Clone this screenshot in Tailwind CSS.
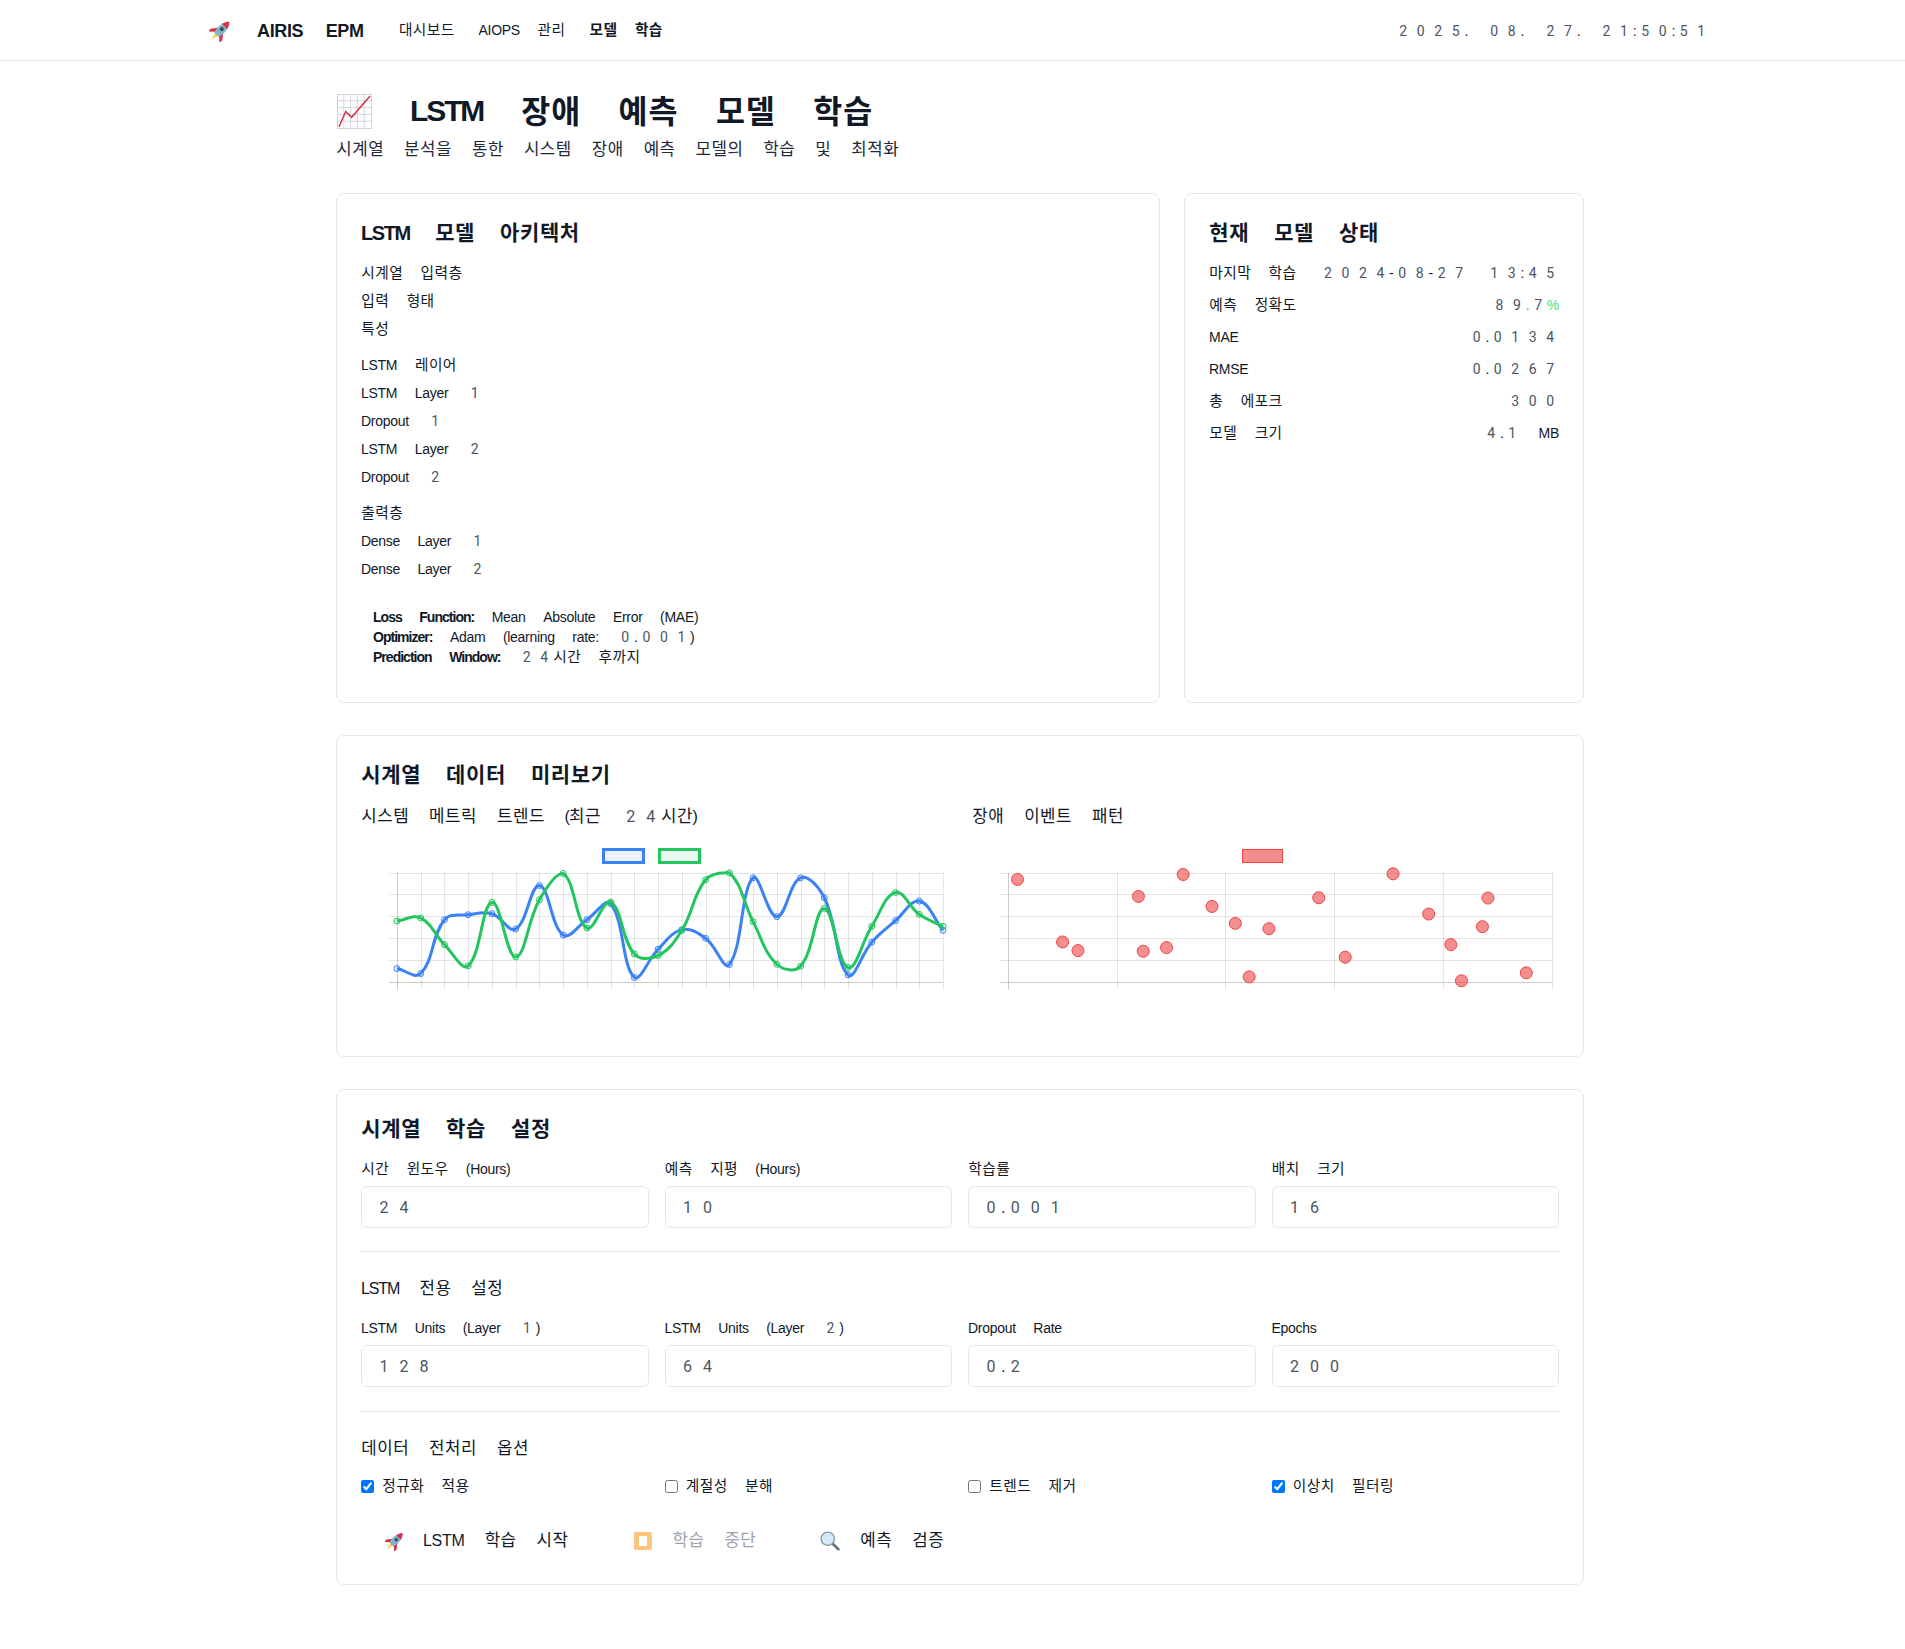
<!DOCTYPE html>
<html lang="ko">
<head>
  <meta charset="UTF-8" />
  <title>LSTM 장애 예측 모델 학습</title>
  <script src="https://cdn.jsdelivr.net/npm/@tailwindcss/browser@4"></script>
</head>
<body class="bg-white text-[#111827] font-['Liberation_Sans','Noto_Sans_CJK_KR',sans-serif]">

  <!-- nav -->
  <nav class="h-[61px] pt-[1px] border-b border-[#e5e7eb] flex items-center justify-between pl-[208px] pr-[195px]">
    <div class="flex items-center">
      <svg class="ml-[1px] w-[23px] h-[23px]" viewBox="0 0 24 24">
        <g transform="rotate(45 12 12)">
          <path d="M8 12L3.500 18v4L9 17zM16 12l4.500 6v4L15 17z" fill="#dd2e44"/>
          <path d="M9.500 17h5L12 25z" fill="#ffcc4d"/>
          <path d="M12 -1C15 2 16.500 7 16.500 12L15.500 18h-7L7.500 12C7.500 7 9 2 12 -1z" fill="#7fb2cc"/>
          <path d="M12 -1C13.800 .8 15.100 3 15.800 6H8.200C8.900 3 10.200 .8 12 -1z" fill="#dd2e44"/>
          <circle cx="12" cy="10" r="2" fill="#37474f"/>
        </g>
      </svg>
      <span class="ml-[25px] text-lg font-bold">AIRIS EPM</span>
      <div class="ml-[35px] flex items-center gap-[24px] text-sm">
        <span>대시보드</span>
        <span>AIOPS 관리</span>
        <span class="font-bold">모델 학습</span>
      </div>
    </div>
    <div class="text-sm">2025. 08. 27. 21:50:51</div>
  </nav>

  <main class="ml-[336px] w-[1248px] pt-[30px]">
    <!-- page title -->
    <div class="flex items-center h-[40px]">
      <svg class="ml-[1px] w-[35px] h-[35px]" viewBox="0 0 36 36">
        <rect x="0.500" y="0.500" width="35" height="35" fill="#fff" stroke="#ccd6dd"/>
        <path d="M0 7h36M0 14h36M0 21h36M0 28h36M7 0v36M14 0v36M21 0v36M28 0v36" stroke="#ccd6dd" stroke-width="1" fill="none"/>
        <path d="M2 34l7-16 6 6L34 2" stroke="#dd2e44" stroke-width="1.500" fill="none"/>
      </svg>
      <h1 class="ml-[38px] text-[30px] font-bold">LSTM 장애 예측 모델 학습</h1>
    </div>
    <p class="mt-[7px] text-base text-[#1f2937] leading-[24px]">시계열 분석을 통한 시스템 장애 예측 모델의 학습 및 최적화</p>

    <div class="grid grid-cols-3 gap-6 mt-[31px]">
      <!-- architecture -->
      <section class="col-span-2 h-[510px] border border-[#e5e7eb] rounded-lg p-6">
        <h3 class="mt-[1px] text-xl font-bold leading-[28px] mb-[16px]">LSTM 모델 아키텍처</h3>
        <div class="text-sm leading-[20px] flex flex-col gap-[8px]">
          <div>시계열 입력층</div>
          <div>입력 형태</div>
          <div>특성</div>
        </div>
        <div class="text-sm leading-[20px] flex flex-col gap-[8px] mt-[16px]">
          <div>LSTM 레이어</div>
          <div>LSTM Layer 1</div>
          <div>Dropout 1</div>
          <div>LSTM Layer 2</div>
          <div>Dropout 2</div>
        </div>
        <div class="text-sm leading-[20px] flex flex-col gap-[8px] mt-[16px]">
          <div>출력층</div>
          <div>Dense Layer 1</div>
          <div>Dense Layer 2</div>
        </div>
        <div class="mt-[28px] px-3 text-sm leading-[20px]">
          <div><b>Loss Function:</b> Mean Absolute Error (MAE)</div>
          <div><b>Optimizer:</b> Adam (learning rate: 0.001)</div>
          <div><b>Prediction Window:</b> 24시간 후까지</div>
        </div>
      </section>

      <!-- status -->
      <section class="h-[510px] border border-[#e5e7eb] rounded-lg p-6">
        <h3 class="mt-[1px] text-xl font-bold leading-[28px] mb-[16px]">현재 모델 상태</h3>
        <div class="text-sm leading-[20px] flex flex-col gap-[12px]">
          <div class="flex justify-between"><span>마지막 학습</span><span>2024-08-27 13:45</span></div>
          <div class="flex justify-between"><span>예측 정확도</span><span class="text-[#22c55e]">89.7<span class="text-[#4ade80]">%</span></span></div>
          <div class="flex justify-between"><span>MAE</span><span>0.0134</span></div>
          <div class="flex justify-between"><span>RMSE</span><span>0.0267</span></div>
          <div class="flex justify-between"><span>총 에포크</span><span>300</span></div>
          <div class="flex justify-between"><span>모델 크기</span><span>4.1 MB</span></div>
        </div>
      </section>
    </div>

    <!-- preview -->
    <section class="mt-[32px] h-[322px] border border-[#e5e7eb] rounded-lg p-6">
      <h3 class="mt-[1px] text-xl font-bold leading-[28px] mb-[16px]">시계열 데이터 미리보기</h3>
      <div class="grid grid-cols-2 gap-6">
        <div>
          <h4 class="text-base leading-[24px]">시스템 메트릭 트렌드 (최근 24시간)</h4>
          <svg id="lineChart" class="block mt-[8px]" width="587" height="160"></svg>
        </div>
        <div>
          <h4 class="text-base leading-[24px]">장애 이벤트 패턴</h4>
          <svg id="scatterChart" class="block mt-[8px]" width="587" height="160"></svg>
        </div>
      </div>
    </section>

    <!-- settings -->
    <section class="mt-[32px] h-[496px] border border-[#e5e7eb] rounded-lg p-6">
      <h3 class="mt-[1px] text-xl font-bold leading-[28px] mb-[16px]">시계열 학습 설정</h3>

      <div class="grid grid-cols-4 gap-4 text-sm">
        <div><div class="leading-[20px] mb-[7px]">시간 윈도우 (Hours)</div>
          <div class="flex items-center h-[42px] pl-[12px] pt-[2px] border border-[#e5e7eb] rounded-md text-base">24</div></div>
        <div><div class="leading-[20px] mb-[7px]">예측 지평 (Hours)</div>
          <div class="flex items-center h-[42px] pl-[12px] pt-[2px] border border-[#e5e7eb] rounded-md text-base">10</div></div>
        <div><div class="leading-[20px] mb-[7px]">학습률</div>
          <div class="flex items-center h-[42px] pl-[12px] pt-[2px] border border-[#e5e7eb] rounded-md text-base">0.001</div></div>
        <div><div class="leading-[20px] mb-[7px]">배치 크기</div>
          <div class="flex items-center h-[42px] pl-[12px] pt-[2px] border border-[#e5e7eb] rounded-md text-base">16</div></div>
      </div>

      <div class="border-t border-[#e5e7eb] mt-[23px] pt-[25px]">
        <h4 class="text-base leading-[24px] mb-[17px]">LSTM 전용 설정</h4>
        <div class="grid grid-cols-4 gap-4 text-sm">
          <div><div class="leading-[20px] mb-[7px]">LSTM Units (Layer 1)</div>
            <div class="flex items-center h-[42px] pl-[12px] pt-[2px] border border-[#e5e7eb] rounded-md text-base">128</div></div>
          <div><div class="leading-[20px] mb-[7px]">LSTM Units (Layer 2)</div>
            <div class="flex items-center h-[42px] pl-[12px] pt-[2px] border border-[#e5e7eb] rounded-md text-base">64</div></div>
          <div><div class="leading-[20px] mb-[7px]">Dropout Rate</div>
            <div class="flex items-center h-[42px] pl-[12px] pt-[2px] border border-[#e5e7eb] rounded-md text-base">0.2</div></div>
          <div><div class="leading-[20px] mb-[7px]">Epochs</div>
            <div class="flex items-center h-[42px] pl-[12px] pt-[2px] border border-[#e5e7eb] rounded-md text-base">200</div></div>
        </div>
      </div>

      <div class="border-t border-[#e5e7eb] mt-[24px] pt-[25px]">
        <h4 class="text-base leading-[24px] mb-[15px]">데이터 전처리 옵션</h4>
        <div class="grid grid-cols-4 gap-4 text-sm">
          <label class="flex items-center gap-[8px] h-[20px]"><input type="checkbox" checked class="w-[13px] h-[13px] accent-[#0075ff]"><span>정규화 적용</span></label>
          <label class="flex items-center gap-[8px] h-[20px]"><input type="checkbox" class="w-[13px] h-[13px]"><span>계절성 분해</span></label>
          <label class="flex items-center gap-[8px] h-[20px]"><input type="checkbox" class="w-[13px] h-[13px]"><span>트렌드 제거</span></label>
          <label class="flex items-center gap-[8px] h-[20px]"><input type="checkbox" checked class="w-[13px] h-[13px] accent-[#0075ff]"><span>이상치 필터링</span></label>
        </div>
      </div>

      <div class="flex items-center mt-[25px] text-base">
        <button class="flex items-center px-6 h-[40px]">
          <svg class="w-[20px] h-[20px] mr-[18px]" viewBox="0 0 24 24">
            <g transform="rotate(45 12 12)">
              <path d="M8 12L3.500 18v4L9 17zM16 12l4.500 6v4L15 17z" fill="#dd2e44"/>
              <path d="M9.500 17h5L12 25z" fill="#ffcc4d"/>
              <path d="M12 -1C15 2 16.500 7 16.500 12L15.500 18h-7L7.500 12C7.500 7 9 2 12 -1z" fill="#7fb2cc"/>
              <path d="M12 -1C13.800 .8 15.100 3 15.800 6H8.200C8.900 3 10.200 .8 12 -1z" fill="#dd2e44"/>
              <circle cx="12" cy="10" r="2" fill="#37474f"/>
            </g>
          </svg>
          <span>LSTM 학습 시작</span>
        </button>
        <button class="flex items-center px-6 h-[40px] ml-[18px] text-[#9ca3af]">
          <span class="flex items-center justify-center w-[18px] h-[18px] mr-[20px] rounded-[2px] bg-[#fcc57c]"><span class="w-[8px] h-[10px] bg-white"></span></span>
          <span>학습 중단</span>
        </button>
        <button class="flex items-center px-6 h-[40px] ml-[16px]">
          <svg class="w-[20px] h-[20px] mr-[20px]" viewBox="0 0 18 18">
            <path d="M11 11l5.500 5.500" stroke="#66757f" stroke-width="2.500" stroke-linecap="round"/>
            <circle cx="7" cy="7" r="6" fill="#d5e8f5" stroke="#8899a6" stroke-width="1.200"/>
          </svg>
          <span>예측 검증</span>
        </button>
      </div>
    </section>
  </main>

  <script>
    // the reference font sets digits and spaces in wide cells, so split text into runs
    function spaceText(root) {
      const walker = document.createTreeWalker(root, NodeFilter.SHOW_TEXT);
      const nodes = [];
      while (walker.nextNode()) {
        if (walker.currentNode.parentNode.tagName !== 'SCRIPT') nodes.push(walker.currentNode);
      }
      nodes.forEach(node => {
        let text = node.nodeValue;
        if (text.includes('\n')) text = text.trim();
        if (!text) return;
        const style = getComputedStyle(node.parentNode);
        const size = parseFloat(style.fontSize);
        const bold = parseInt(style.fontWeight) >= 600 && size !== 18;
        const big = size >= 30;
        const frag = document.createDocumentFragment();
        text.match(/\d|[\uAC00-\uD7A3]| +|[^\d\uAC00-\uD7A3 ]+/g).forEach(run => {
          const span = document.createElement('span');
          if (/\d/.test(run)) {
            span.className = "inline-block w-[1.25em] text-center font-['Roboto'] text-[#4b5563]";
          } else if (/[\uAC00-\uD7A3]/.test(run)) {
            span.className = big
              ? "relative top-[2px] inline-block w-[0.95em] text-center text-[1.05em]"
              : "inline-block w-[0.95em] text-center text-[1.05em]";
          } else if (run[0] === ' ') {
            span.className = "inline-block w-[1.25em]";
            run = '';
          } else {
            span.className = bold ? "tracking-[-0.07em]" : "tracking-[-0.02em]";
          }
          span.textContent = run;
          frag.appendChild(span);
        });
        node.parentNode.replaceChild(frag, node);
      });
    }
    spaceText(document.body);

    const NS = 'http://www.w3.org/2000/svg';

    function add(svg, tag, attrs) {
      const el = document.createElementNS(NS, tag);
      Object.keys(attrs).forEach(k => el.setAttribute(k, attrs[k]));
      svg.appendChild(el);
      return el;
    }

    // plot area is 109px high, 6 horizontal lines
    const plotTop = 35.5, plotBottom = 144.5;

    function drawGrid(svg, left, right, xs) {
      const rows = 5;
      for (let i = 0; i <= rows; i++) {
        const y = Math.round(plotTop + (plotBottom - plotTop) * i / rows) + .5;
        add(svg, 'line', { x1: left - 8, x2: right, y1: y, y2: y, stroke: i === rows ? 'rgba(0,0,0,.2)' : 'rgba(0,0,0,.1)' });
      }
      xs.forEach((x, i) => {
        const px = Math.round(x) + .5;
        add(svg, 'line', { x1: px, x2: px, y1: plotTop, y2: plotBottom + 8, stroke: i === 0 ? 'rgba(0,0,0,.2)' : 'rgba(0,0,0,.1)' });
      });
    }

    // spline like a line chart with tension .4, control points kept inside the plot
    function smooth(pts, minY, maxY) {
      const tension = 0.4;
      const clamp = v => Math.min(maxY, Math.max(minY, v));
      const dist = (a, b) => Math.hypot(a[0] - b[0], a[1] - b[1]);
      const ctrl = pts.map((p, i) => {
        const prev = pts[Math.max(i - 1, 0)], next = pts[Math.min(i + 1, pts.length - 1)];
        const d01 = dist(prev, p), d12 = dist(p, next), sum = d01 + d12 || 1;
        const fa = tension * d01 / sum, fb = tension * d12 / sum;
        return {
          inn: [p[0] - fa * (next[0] - prev[0]), clamp(p[1] - fa * (next[1] - prev[1]))],
          out: [p[0] + fb * (next[0] - prev[0]), clamp(p[1] + fb * (next[1] - prev[1]))]
        };
      });
      let d = 'M' + pts[0][0] + ' ' + pts[0][1];
      for (let i = 1; i < pts.length; i++) {
        d += ' C' + ctrl[i - 1].out.join(' ') + ' ' + ctrl[i].inn.join(' ') + ' ' + pts[i].join(' ');
      }
      return d;
    }

    const blue = [505,520,358,343,340,386,255,404,358,310,532,447,388,414,493,232,349,232,292,524,426,361,302,390];
    const green = [362,353,433,497,306,470,298,219,383,305,461,466,390,238,217,364,492,498,324,502,378,276,342,378];

    const line = document.getElementById('lineChart');
    const left = 36, right = 582;
    const xs = blue.map((_, i) => left + (right - left) * i / 23);
    drawGrid(line, left, right, xs);

    // values read off as offsets: 216 = top line, 544 = bottom line
    const toY = v => plotTop + (v - 216) / 328 * (plotBottom - plotTop);

    [[blue, '#3b82f6'], [green, '#22c55e']].forEach(([data, color]) => {
      const pts = data.map((v, i) => [xs[i], toY(v)]);
      add(line, 'path', { d: smooth(pts, plotTop, plotBottom), fill: 'none', stroke: color, 'stroke-width': 3 });
      pts.forEach(p => add(line, 'circle', { cx: p[0], cy: p[1], r: 3, fill: color, 'fill-opacity': .1, stroke: color, 'stroke-width': 1 }));
    });
    add(line, 'rect', { x: 242.5, y: 12.5, width: 40, height: 13, fill: 'rgba(59,130,246,.1)', stroke: '#3b82f6', 'stroke-width': 3 });
    add(line, 'rect', { x: 298.5, y: 12.5, width: 40, height: 13, fill: 'rgba(34,197,94,.1)', stroke: '#22c55e', 'stroke-width': 3 });

    const scatter = document.getElementById('scatterChart');
    const sx = v => 36 + (v - 122) / 1376 * 544;
    drawGrid(scatter, 36, 580, [122,398,671,947,1222,1498].map(sx));
    const events = [[146,237],[260,425],[299,451],[452,288],[464,453],[523,442],[565,222],[638,318],[697,369],[732,530],[782,385],[908,292],[975,471],[1096,220],[1186,341],[1242,433],[1269,542],[1322,379],[1336,293],[1433,518]];
    events.forEach(e => add(scatter, 'circle', { cx: sx(e[0]), cy: toY(e[1]), r: 6, fill: 'rgba(239,68,68,.6)', stroke: '#ef4444', 'stroke-width': 1 }));
    add(scatter, 'rect', { x: 270.5, y: 12.5, width: 40, height: 13, fill: 'rgba(239,68,68,.6)', stroke: '#ef4444', 'stroke-width': 1 });
  </script>
</body>
</html>
